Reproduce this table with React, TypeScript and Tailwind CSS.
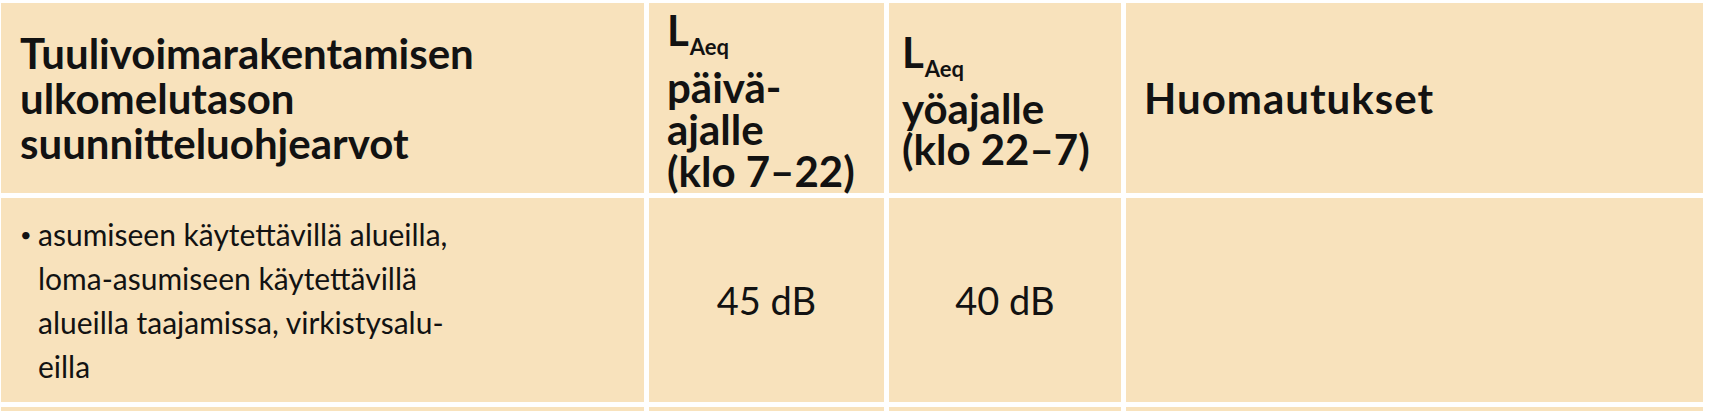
const cell = 'bg-[#f8e2bc] flex flex-col justify-center'

function LAeq() {
  return (
    <div className="flex h-[55px] items-start">
      <span className="leading-[38px]">L</span>
      <span className="mt-[25px] ml-[1px] text-[22px] leading-none">Aeq</span>
    </div>
  )
}

export default function App() {
  return (
    <div className="h-[411px] w-[1711px] overflow-hidden bg-white pl-[1px] pt-[3px] text-[#121212] font-['Lato',sans-serif]">
      <div className="grid grid-cols-[643px_235px_232px_577px] grid-rows-[190px_204px_40px] gap-[5px]">
        {/* header row */}
        <div className={`${cell} pl-[19px] text-[42px] leading-[45px] font-bold`}>
          <div>Tuulivoimarakentamisen</div>
          <div>ulkomelutason</div>
          <div>suunnitteluohjearvot</div>
        </div>
        <div className="flex flex-col bg-[#f8e2bc] pl-[18px] pt-[8px] text-[42px] leading-[42px] font-bold">
          <LAeq />
          <div>päivä-</div>
          <div>ajalle</div>
          <div>(klo 7–22)</div>
        </div>
        <div className="flex flex-col bg-[#f8e2bc] pl-[13px] pt-[30px] text-[42px] leading-[41px] font-bold">
          <LAeq />
          <div>yöajalle</div>
          <div>(klo 22–7)</div>
        </div>
        <div className={`${cell} pl-[18px] text-[42px] tracking-[1px] font-bold`}>
          <div>Huomautukset</div>
        </div>

        {/* first value row */}
        <div className={`${cell} pl-[19px] text-[30px] leading-[44px]`}>
          <div className="flex">
            <span className="w-[18px] shrink-0 text-[20px]">•</span>
            <div>
              <div>asumiseen käytettävillä alueilla,</div>
              <div>loma-asumiseen käytettävillä</div>
              <div>alueilla taajamissa, virkistysalu-</div>
              <div>eilla</div>
            </div>
          </div>
        </div>
        <div className={`${cell} items-center text-[38px]`}>45 dB</div>
        <div className={`${cell} items-center text-[38px]`}>40 dB</div>
        <div className={cell} />

        {/* next row, cut off */}
        <div className={cell} />
        <div className={cell} />
        <div className={cell} />
        <div className={cell} />
      </div>
    </div>
  )
}
